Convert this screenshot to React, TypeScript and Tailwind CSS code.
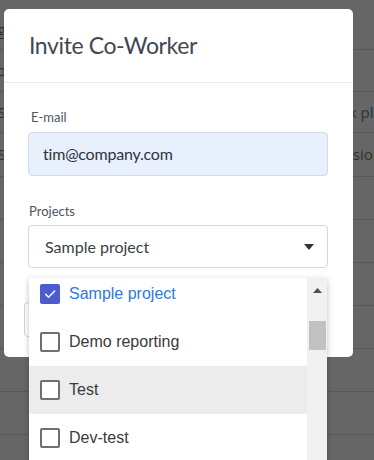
import React from "react";

const bgRows = [
  { h: "h-[50px] pt-[10px]", left: "ng", right: "", off: "w-[323px]" },
  { h: "h-[42px]", left: "o", right: "", off: "w-[323px]" },
  { h: "h-[41px]", left: "S", right: "Task planning", off: "w-[319px]" },
  { h: "h-[44px]", left: "S", right: "Sessions", off: "w-[323px]" },
  { h: "h-[43px]", left: "", right: "", off: "w-[323px]" },
  { h: "h-[43px]", left: "", right: "", off: "w-[323px]" },
  { h: "h-[43px]", left: "", right: "", off: "w-[323px]" },
  { h: "h-[43px]", left: "", right: "", off: "w-[323px]" },
  { h: "h-[43px]", left: "", right: "", off: "w-[323px]" },
  { h: "h-[43px]", left: "", right: "", off: "w-[323px]" },
];

function Checkbox({ checked }: { checked: boolean }) {
  if (checked) {
    return (
      <div className="w-[20px] h-[20px] rounded-[2px] bg-[#4e5bd0] flex items-center justify-center shrink-0">
        <svg width="14" height="14" viewBox="0 0 24 24" fill="none">
          <path d="M4.5 12.5l5 5L20 7" stroke="white" strokeWidth="2.6" strokeLinecap="round" strokeLinejoin="round" />
        </svg>
      </div>
    );
  }
  return <div className="w-[20px] h-[20px] rounded-[2px] border-2 border-[#6f6f6f] bg-white shrink-0" />;
}

const items = [
  { label: "Sample project", checked: true, hover: false },
  { label: "Demo reporting", checked: false, hover: false },
  { label: "Test", checked: false, hover: true },
  { label: "Dev-test", checked: false, hover: false },
];

export default function App() {
  return (
    <div className="relative w-[374px] h-[460px] overflow-hidden bg-white" style={{ fontFamily: "'Open Sans', sans-serif" }}>
      {/* background page */}
      <div className="flex flex-col text-[15px] text-[#7a7a7a]">
        {bgRows.map((r, i) => (
          <div key={i} className={`${r.h} flex items-center border-b border-[#dcdcdc] overflow-hidden`}>
            <div className="w-[6px] shrink-0 overflow-hidden flex justify-end whitespace-nowrap">{r.left}</div>
            <div className={`${r.off} shrink-0`} />
            <div className="whitespace-nowrap shrink-0">{r.right}</div>
          </div>
        ))}
      </div>

      {/* overlay */}
      <div className="absolute inset-0 bg-black/60" />

      {/* modal */}
      <div className="absolute left-[4px] top-[9px] w-[349px] bg-white rounded-[5px] flex flex-col" style={{ fontFamily: "Lato, sans-serif" }}>
        <div className="h-[74px] flex items-center px-[25px] border-b border-[#e9ecef]">
          <h2 className="text-[23px] text-[#3f4852] leading-none tracking-[-0.4px]">Invite Co-Worker</h2>
        </div>
        <div className="pt-[25px] pl-[24px] pr-[25px] flex flex-col">
          <label className="text-[13px] leading-[18px] text-[#4d5560] pl-[3px]">E-mail</label>
          <div className="mt-[6px] h-[44px] rounded-[4px] bg-[#e8f0fe] border border-[#d5dce6] flex items-center px-[14px] text-[16px] text-[#2f3439] tracking-[-0.2px]">
            tim@company.com
          </div>
          <label className="mt-[26px] text-[13px] leading-[18px] text-[#4d5560] pl-[1px]">Projects</label>
          <div className="mt-[5px] h-[43px] rounded-[4px] bg-white border border-[#d3d7dc] flex items-center justify-between pl-[16px] pr-[13px] text-[16px] text-[#3a3f44]">
            <span>Sample project</span>
            <svg width="10" height="6" viewBox="0 0 10 6"><path d="M0 0h10L5 6z" fill="#333" /></svg>
          </div>
        </div>
        <div className="pt-[34px] pb-[20px] px-[20px] flex">
          <div className="h-[35px] w-[90px] rounded-[4px] border border-[#cfd4d9] bg-white" />
        </div>
      </div>

      {/* dropdown */}
      <div className="absolute left-[29px] top-[278px] w-[298px] h-[190px] bg-white flex shadow-[0_2px_6px_rgba(0,0,0,0.25)] overflow-hidden" style={{ fontFamily: "'Liberation Sans', Arial, sans-serif" }}>
        <div className="flex-1 flex flex-col -mt-[8px]">
          {items.map((it) => (
            <div key={it.label} className={`h-[48px] shrink-0 flex items-center pl-[11px] gap-[9px] text-[16px] ${it.hover ? "bg-[#ececec]" : ""} ${it.checked ? "text-[#2f7ad8]" : "text-[#3a3a3a]"}`}>
              <Checkbox checked={it.checked} />
              <span>{it.label}</span>
            </div>
          ))}
        </div>
        <div className="w-[20px] bg-[#f1f1f1] flex flex-col items-center">
          <div className="h-[24px] flex items-center justify-center pt-[1px]">
            <svg width="9" height="5" viewBox="0 0 9 5"><path d="M0 5h9L4.5 0z" fill="#505050" /></svg>
          </div>
          <div className="mt-[19px] w-[17px] h-[29px] bg-[#c1c1c1]" />
        </div>
      </div>
    </div>
  );
}
